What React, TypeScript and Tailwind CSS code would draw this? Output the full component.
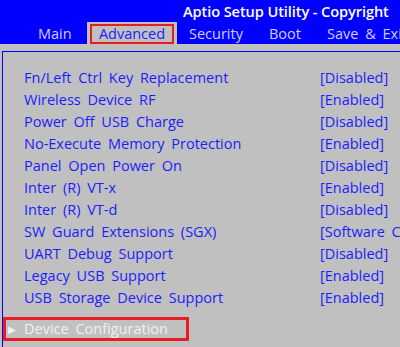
import React from "react";

const rows: [string, string][] = [
  ["Fn/Left Ctrl Key Replacement", "[Disabled]"],
  ["Wireless Device RF", "[Enabled]"],
  ["Power Off USB Charge", "[Disabled]"],
  ["No-Execute Memory Protection", "[Enabled]"],
  ["Panel Open Power On", "[Disabled]"],
  ["Inter (R) VT-x", "[Enabled]"],
  ["Inter (R) VT-d", "[Disabled]"],
  ["SW Guard Extensions (SGX)", "[Software Controlled]"],
  ["UART Debug Support", "[Disabled]"],
  ["Legacy USB Support", "[Enabled]"],
  ["USB Storage Device Support", "[Enabled]"],
];

export default function App() {
  return (
    <div className="relative h-[347px] w-[400px] overflow-hidden bg-[#c0c0c0] font-['Open_Sans',sans-serif] whitespace-nowrap">
      <div className="h-[44px] bg-[#0000ff]">
        <div className="h-[22px] pl-[183px] text-[14.6px] leading-[22px] font-semibold tracking-[-0.1px] text-white">
          Aptio Setup Utility - Copyright
        </div>
        <div className="flex h-[22px] items-end text-[14.5px] leading-[20px] text-[#d0d0ff] [word-spacing:3px]">
          <span className="ml-[38px] w-[49px] shrink-0">Main</span>
          <span className="flex h-[22px] w-[90px] shrink-0 items-end bg-[#c0c0c0] px-[3px] pt-[2px]">
            <span className="flex h-[20px] w-full items-center justify-center border-2 border-[#e81c24] text-[#2020ff]">
              Advanced
            </span>
          </span>
          <span className="ml-[12px] w-[80px] shrink-0">Security</span>
          <span className="w-[58px] shrink-0">Boot</span>
          <span className="shrink-0">Save &amp; Exit</span>
        </div>
      </div>
      <div className="mt-[7px] ml-[2px] h-[300px] border-t border-l border-[#0000ff] pt-[15px]">
        {rows.map(([label, value]) => (
          <div
            key={label}
            className="flex h-[22px] items-center text-[14.5px] text-[#1c1cff] [word-spacing:3px]"
          >
            <span className="w-[317px] shrink-0 pl-[21px]">{label}</span>
            <span className="shrink-0">{value}</span>
          </div>
        ))}
        <div className="mt-[8px] flex h-[24px] w-[186px] items-center border-[3px] border-[#e81c24] text-[14.5px] text-[#f0f0f0] [word-spacing:3px]">
          <span className="ml-[2px] w-[16px] shrink-0 text-[10px]">▶</span>
          <span className="shrink-0">Device Configuration</span>
        </div>
      </div>
    </div>
  );
}
